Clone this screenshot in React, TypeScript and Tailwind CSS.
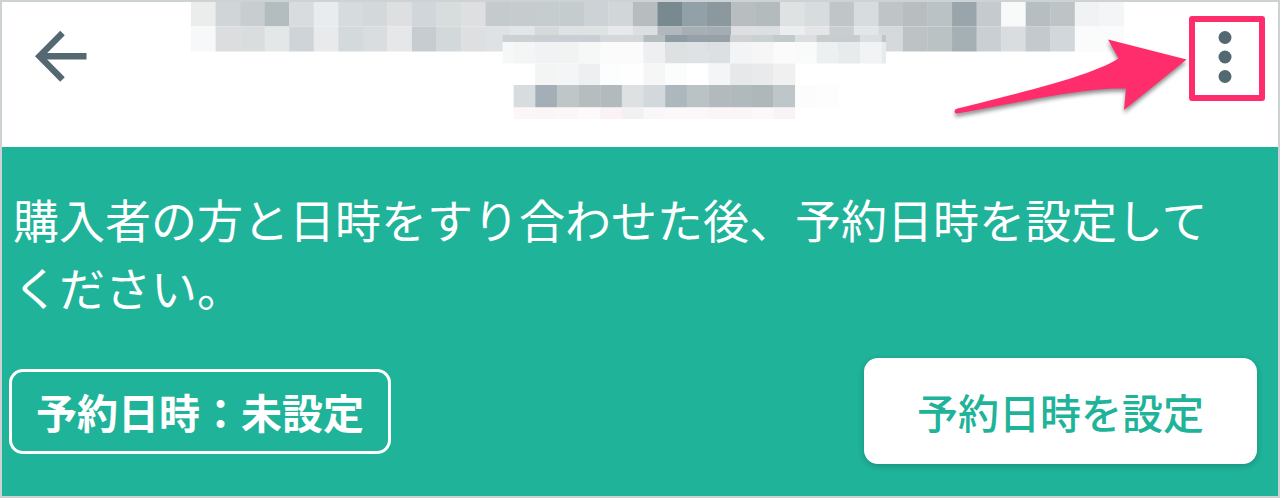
const CELL = 24.55;
const SMALL_CELL = 21.65;

// Blurred-out title: two large rows, then the finer block laid over them.
const titleRows = [
  {
    y: 0,
    h: 24.5,
    fills: [
      "#ebeded", "#d0d6d8", "#c8ced0", "#b3bdc0", "#d8dcde", "#e9ecee", "#d6dbde", "#d3d8db", "#dddfe1", "#d0d6da",
      "#d7dddd", "#dddfe1", "#c5cacd", "#c6cbce", "#c6cdcf", "#c5cccd", "#ccd2d5", "#d1d7d9", "#b7bcbe", "#788990",
      "#92a0a7", "#8b999f", "#b8bdbf", "#b3bbbd", "#dee2e3", "#d7dcdf", "#c0c6c8", "#d7dcde", "#bfc5c7", "#b8bdbf",
      "#bac2c5", "#9aa5ab", "#c4cacd", "#f8fafa", "#b7bec1", "#bec4c6", "#f1f2f4", "#f4f5f6",
    ],
  },
  {
    y: 24.5,
    h: 25,
    fills: [
      "#f7f8f9", "#dcdddf", "#dadddd", "#e4e7e7", "#ced4d7", "#e9eaeb", "#d4d9dc", "#dadddf", "#e5e7e9", "#c7ccd1",
      "#d3d8db", "#dddfe1", "#dfe2e4", "#e3e6e6", "#d5d9da", "#dee2e3", "#dee2e3", "#e6e8ea", "#dcdfe1", "#b0b8bd",
      "#a5afb4", "#a3adb3", "#dddfe1", "#dcdfe1", "#ebedee", "#e3e5e7", "#c9cfd1", "#e3e6e8", "#d5d9db", "#bdc3c5",
      "#bbc2c4", "#a4b0b3", "#c9cfd2", "#dadddf", "#c3c9cc", "#d1d7da", "#fafbfb", "#fbfbfb",
    ],
  },
];

const detailRows = [
  {
    y: 33,
    h: 7,
    start: 0,
    fills: [
      "#ccd2d4", "#c9cfd2", "#c9cfd2", "#c9cfd2", "#d4d8da", "#d4d8da", "#b5bdbf", "#8e9ba3", "#95a1a7",
      "#95a1a7", "#cfd3d6", "#cbd0d3", "#c3cacc", "#dcdfe1", "#c7cdcf", "#c7cdcf", "#dcdfe1",
    ],
  },
  {
    y: 40,
    h: 21.5,
    start: 0,
    fills: [
      "#f4f6f6", "#f1f2f3", "#f1f3f3", "#f6f8f7", "#fafbfa", "#fafbfa", "#eeeff1", "#dde1e2", "#dfe2e4",
      "#dce0e2", "#f3f4f5", "#f6f6f7", "#fcfbfb", "#f9fafa", "#edf0f0", "#e8ebec", "#f1f3f4",
    ],
  },
  {
    y: 61.5,
    h: 21.5,
    start: 1,
    fills: [
      "#f3f4f4", "#f4f5f6", "#eeeff1", "#fcfdfd", "#fefefe", "#f6f6f7", "#fbfdfc", "#ffffff", "#f4f5f6",
      "#e7e8ea", "#e9eaec", "#f0f0f1",
    ],
  },
  {
    y: 83,
    h: 22.5,
    start: 0,
    fills: [
      "#d7dcde", "#a3aeb6", "#bfc6c8", "#b5bdbf", "#b3babd", "#dde1e1", "#d2d8db", "#adb7be", "#b9c2c5",
      "#b2babd", "#b0b9bc", "#aeb8bb", "#bfc6c9", "#fcfcfc", "#fdfdfd",
    ],
  },
  {
    y: 105.5,
    h: 11.5,
    start: 0,
    fills: [
      "#fbf7f8", "#fbf5f6", "#fbf7f8", "#fdfafb", "#faf2f4", "#f3f0f2", "#f9f7f9", "#fcf7f8", "#fcf7f8",
      "#fcf5f6", "#fcf5f6", "#fcf7f8", "#f8f3f6",
    ],
  },
];

function HiddenTitle() {
  return (
    <svg viewBox="0 0 933 117" className="w-[933px] min-w-0" aria-hidden="true">
      {titleRows.map((row) =>
        row.fills.map((fill, i) => (
          <rect key={`${row.y}-${i}`} x={i * CELL} y={row.y} width={CELL + 0.3} height={row.h} fill={fill} />
        )),
      )}
      <rect x="311.5" y="33" width="12" height="7" fill="#ccd2d4" />
      <rect x="311.5" y="40" width="12" height="21.5" fill="#f6f8f7" />
      {detailRows.map((row) =>
        row.fills.map((fill, i) => (
          <rect
            key={`${row.y}-${i}`}
            x={322.6 + (row.start + i) * SMALL_CELL}
            y={row.y}
            width={SMALL_CELL + 0.3}
            height={row.h}
            fill={fill}
          />
        )),
      )}
      <rect x="690.7" y="33" width="4.3" height="7" fill="#c0c6c8" />
      <rect x="690.7" y="40" width="4.3" height="21.5" fill="#e8ebeb" />
    </svg>
  );
}

function BackIcon() {
  return (
    <svg viewBox="0 0 54 54" className="size-[54px]" fill="none" stroke="#536870" strokeWidth="6.4">
      <path d="M29.5 4 6.5 27.3 29.5 50.5" />
      <path d="M8 27.3H53.5" />
    </svg>
  );
}

function PointerArrow() {
  return (
    <svg
      viewBox="0 0 240 90"
      className="pointer-events-none absolute top-[32px] right-[88px] w-[240px] drop-shadow-[0_3px_2px_rgba(0,0,0,0.45)]"
      aria-hidden="true"
    >
      <path
        d="M7.5 74.5C58 61.5 139 43.5 168.500 24.500L158 5.500 236.500 25.500 174 76 176 54.500C134 53 66 69 7.500 79.500Q4.500 80 4.500 77.200 4.500 75.200 7.500 74.500Z"
        fill="#ff2d6c"
      />
    </svg>
  );
}

export default function App() {
  return (
    <div className="border-2 border-[#cdd3d5] bg-white font-['Noto_Sans_CJK_JP',sans-serif]">
      <header className="relative flex h-[145px] items-start justify-between pr-[13px] pl-[31px]">
        <button type="button" aria-label="戻る" className="mt-[27px] mr-[38px] shrink-0">
          <BackIcon />
        </button>
        <HiddenTitle />
        <button
          type="button"
          aria-label="メニュー"
          className="mt-[14px] flex h-[85px] w-[76px] shrink-0 items-center justify-center rounded-[3px] border-[6px] border-[#ff2d6c]"
        >
          <svg viewBox="0 0 14 54" className="mb-[4px] ml-[-4px] h-[54px] w-[14px]" fill="#536870">
            <circle cx="7" cy="7.500" r="6.500" />
            <circle cx="7" cy="27" r="6.500" />
            <circle cx="7" cy="46.500" r="6.500" />
          </svg>
        </button>
        <PointerArrow />
      </header>

      <main className="bg-[#1fb399] pt-[37px] pr-[21px] pb-[32px] pl-[7px] text-white">
        <p className="pr-6 pl-1 text-[46px] leading-[68px]">
          購入者の方と日時をすり合わせた後、予約日時を設定してください。
        </p>
        <div className="mt-[38px] flex items-center justify-between">
          <p className="rounded-[14px] border-[3px] border-white px-[24px] py-[10px] text-[41px] leading-[59px] font-bold">
            予約日時：未設定
          </p>
          <button
            type="button"
            className="h-[106px] rounded-[14px] bg-white px-[53px] text-[41px] leading-[59px] font-medium text-[#1fb399] shadow-[0_2px_6px_rgba(0,0,0,0.2)]"
          >
            予約日時を設定
          </button>
        </div>
      </main>
    </div>
  );
}
